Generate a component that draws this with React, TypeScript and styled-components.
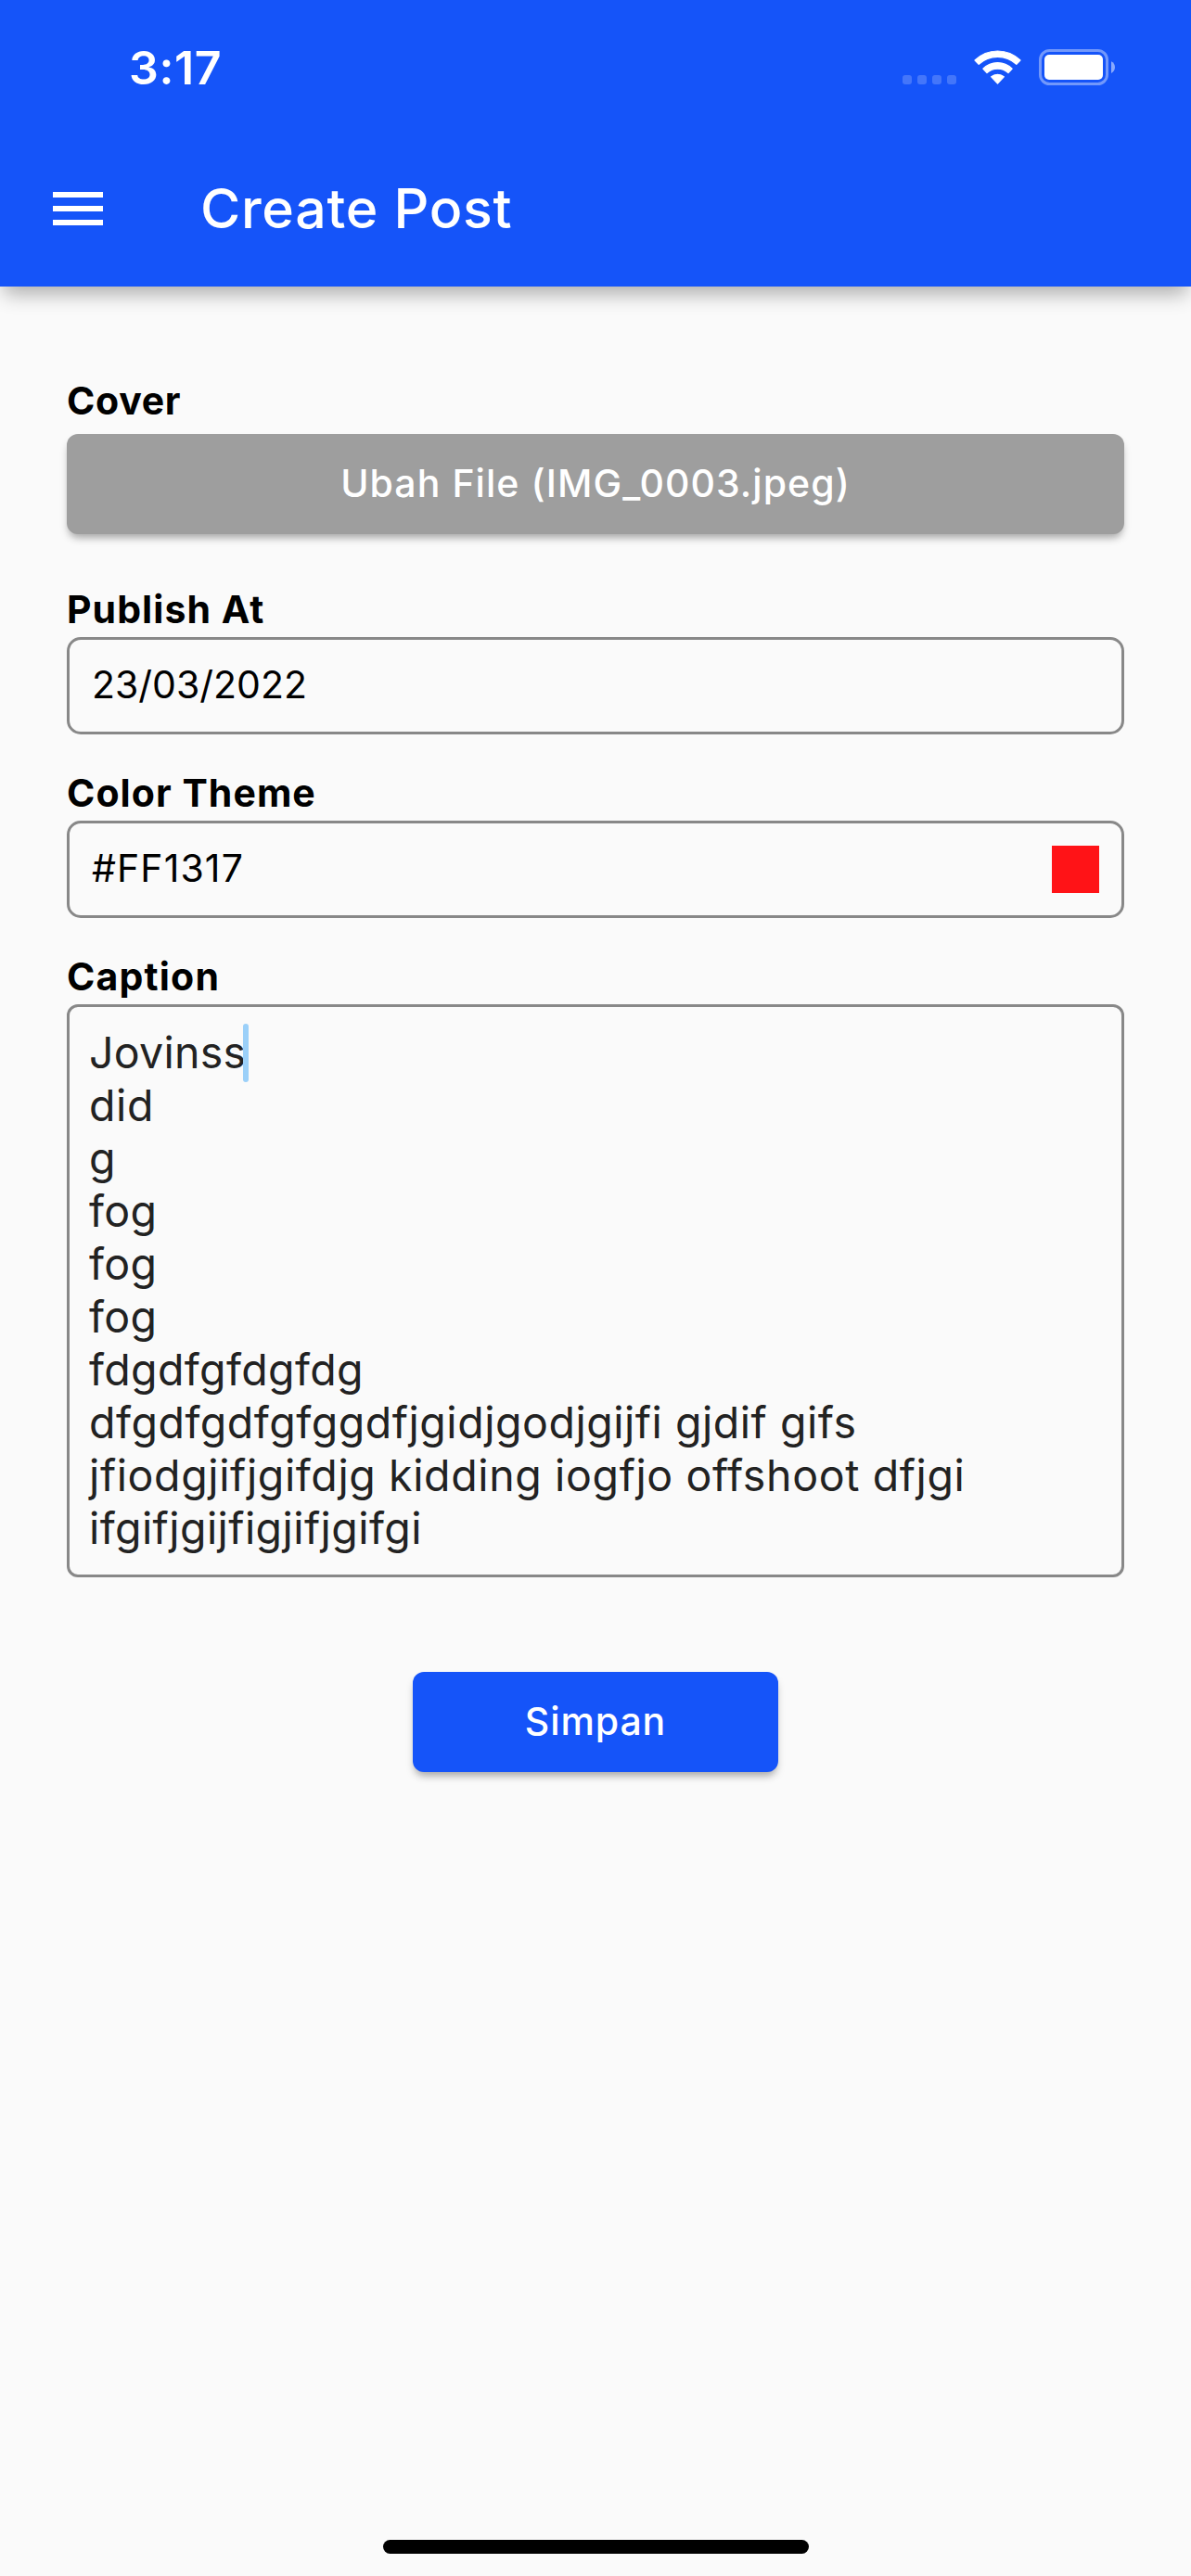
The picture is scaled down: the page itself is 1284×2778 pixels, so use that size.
import React from 'react';
import styled, { createGlobalStyle } from 'styled-components';

const BLUE = '#1554f9';

const GlobalStyle = createGlobalStyle`
  * { box-sizing: border-box; }
  body {
    margin: 0;
    background: #fafafa;
    font-family: Inter, 'Liberation Sans', sans-serif;
    font-variant-ligatures: none;
  }
`;

const Screen = styled.div`
  width: 1284px;
  height: 2778px;
  display: flex;
  flex-direction: column;
  overflow: hidden;
  background: #fafafa;
`;

const AppBar = styled.header`
  flex: none;
  height: 309px;
  background: ${BLUE};
  color: #fff;
  box-shadow: 0 12px 20px -4px rgba(0, 0, 0, 0.31);
`;

const StatusBar = styled.div`
  height: 141px;
  padding: 43px 82px 0 139px;
  display: flex;
  justify-content: space-between;
  align-items: flex-start;
`;

const Clock = styled.span`
  font-size: 50px;
  font-weight: 600;
  line-height: 60px;
  letter-spacing: 0.6px;
`;

const StatusIcons = styled.div`
  display: flex;
  padding-top: 10px;
`;

const Toolbar = styled.div`
  height: 168px;
  padding-left: 57px;
  display: flex;
  align-items: center;
`;

const MenuButton = styled.button`
  width: 54px;
  height: 36px;
  padding: 0;
  border: 0;
  background: none;
  display: flex;
  flex-direction: column;
  justify-content: space-between;
`;

const MenuLine = styled.span`
  width: 100%;
  height: 6px;
  background: #fff;
`;

const Title = styled.h1`
  margin: 0 0 0 105px;
  font-size: 59px;
  font-weight: 500;
  line-height: 70px;
  letter-spacing: 0.7px;
`;

const Form = styled.main`
  flex: 1;
  padding: 98px 72px 0;
  display: flex;
  flex-direction: column;
`;

const Group = styled.section<{ $gap?: number; $after: number }>`
  display: flex;
  flex-direction: column;
  gap: ${(p) => p.$gap ?? 5}px;
  margin-bottom: ${(p) => p.$after}px;
`;

const Label = styled.label<{ $spacing?: number }>`
  font-size: 41px;
  font-weight: 700;
  line-height: 50px;
  letter-spacing: ${(p) => p.$spacing ?? 1.05}px;
  color: #000;
`;

const RaisedButton = styled.button<{ $color: string; $width?: string; $spacing: number }>`
  width: ${(p) => p.$width ?? '100%'};
  height: 108px;
  padding: 0 0 2px;
  border: 0;
  border-radius: 12px;
  background: ${(p) => p.$color};
  color: #fff;
  font: 500 41px Inter, 'Liberation Sans', sans-serif;
  letter-spacing: ${(p) => p.$spacing}px;
  box-shadow: 0 6px 9px -2px rgba(0, 0, 0, 0.34);
`;

const Field = styled.div`
  height: 105px;
  padding: 0 24px;
  border: 3px solid #888;
  border-radius: 15px;
  display: flex;
  align-items: center;
  justify-content: space-between;
`;

const Value = styled.span<{ $spacing?: number }>`
  padding-bottom: 3px;
  font-size: 41px;
  line-height: 50px;
  letter-spacing: ${(p) => p.$spacing ?? 0}px;
  color: #000;
`;

const Swatch = styled.span<{ $color: string }>`
  width: 51px;
  height: 51px;
  background: ${(p) => p.$color};
`;

const TextArea = styled.div`
  height: 618px;
  padding: 21px 21px 0;
  border: 3px solid #888;
  border-radius: 12px;
  font-size: 46.5px;
  line-height: 57px;
  color: #222;
`;

const Line = styled.div<{ $spacing: number }>`
  height: 57px;
  white-space: nowrap;
  letter-spacing: ${(p) => p.$spacing}px;
`;

const CaretAnchor = styled.span`
  position: relative;
`;

const Caret = styled.span`
  position: absolute;
  right: -3px;
  top: -3px;
  width: 6px;
  height: 63px;
  border-radius: 3px;
  background: #9bd0f9;
`;

const Actions = styled.div`
  display: flex;
  justify-content: center;
`;

const HomeArea = styled.footer`
  flex: none;
  height: 39px;
  display: flex;
  justify-content: center;
`;

const HomeIndicator = styled.div`
  width: 459px;
  height: 15px;
  border-radius: 8px;
  background: #000;
`;

const SignalWifiBattery = () => (
  <svg width="230" height="40" viewBox="972 53 230 40" fill="#fff">
    <g opacity="0.2">
      {[973, 989, 1005, 1021].map((x) => (
        <rect key={x} x={x} y="81" width="10" height="10" rx="3" />
      ))}
    </g>
    <g transform="translate(1050 54)" stroke="#fff" strokeWidth="1.2" strokeLinejoin="round">
      <path d="M1 10.6A35 35 0 0 1 50 10.6L45.8 14.9A29.9 29.9 0 0 0 5.2 14.9Z" transform="translate(0 .4)" />
      <path d="M9.8 19.8A22 22 0 0 1 41.2 19.8L37 24.2A17.2 17.2 0 0 0 14 24.2Z" transform="translate(0 .4)" />
      <path d="M18.7 28.8A10.6 10.6 0 0 1 32.3 28.8L25.5 36Z" />
    </g>
    <rect x="1121.5" y="54.5" width="72" height="36" rx="10" fill="none" stroke="#fff" strokeWidth="3" opacity="0.4" />
    <rect x="1126" y="59" width="63" height="27" rx="5" />
    <path d="M1198 66.3C1200.5 67.3 1202 69.8 1202 72.6C1202 75.4 1200.5 77.9 1198 79Z" opacity="0.5" />
  </svg>
);

const caption: { text: string; spacing: number }[] = [
  { text: 'Jovinss', spacing: 0.25 },
  { text: 'did', spacing: 0.6 },
  { text: 'g', spacing: 0.4 },
  { text: 'fog', spacing: 0.4 },
  { text: 'fog', spacing: 0.4 },
  { text: 'fog', spacing: 0.4 },
  { text: 'fdgdfgfdgfdg', spacing: 0.38 },
  { text: 'dfgdfgdfgfggdfjgidjgodjgijfi gjdif gifs', spacing: 0.53 },
  { text: 'jfiodgjifjgifdjg kidding iogfjo offshoot dfjgi', spacing: 0.62 },
  { text: 'ifgifjgijfigjifjgifgi', spacing: 0.43 },
];

export default function App() {
  return (
    <>
      <GlobalStyle />
      <Screen>
        <AppBar>
          <StatusBar>
            <Clock>3:17</Clock>
            <StatusIcons>
              <SignalWifiBattery />
            </StatusIcons>
          </StatusBar>
          <Toolbar>
            <MenuButton aria-label="Menu">
              <MenuLine />
              <MenuLine />
              <MenuLine />
            </MenuButton>
            <Title>Create Post</Title>
          </Toolbar>
        </AppBar>
        <Form>
          <Group $gap={11} $after={56}>
            <Label $spacing={0.7}>Cover</Label>
            <RaisedButton $color="#9e9e9e" $spacing={1.05}>
              Ubah File (IMG_0003.jpeg)
            </RaisedButton>
          </Group>
          <Group $after={38}>
            <Label>Publish At</Label>
            <Field>
              <Value>23/03/2022</Value>
            </Field>
          </Group>
          <Group $after={38}>
            <Label>Color Theme</Label>
            <Field>
              <Value $spacing={1.1}>#FF1317</Value>
              <Swatch $color="#ff1317" />
            </Field>
          </Group>
          <Group $after={102}>
            <Label $spacing={1.2}>Caption</Label>
            <TextArea>
              {caption.map((line, i) => (
                <Line key={i} $spacing={line.spacing}>
                  {i === 0 ? (
                    <CaretAnchor>
                      {line.text}
                      <Caret />
                    </CaretAnchor>
                  ) : (
                    line.text
                  )}
                </Line>
              ))}
            </TextArea>
          </Group>
          <Actions>
            <RaisedButton $color={BLUE} $width="393.4px" $spacing={0.9}>
              Simpan
            </RaisedButton>
          </Actions>
        </Form>
        <HomeArea>
          <HomeIndicator />
        </HomeArea>
      </Screen>
    </>
  );
}
